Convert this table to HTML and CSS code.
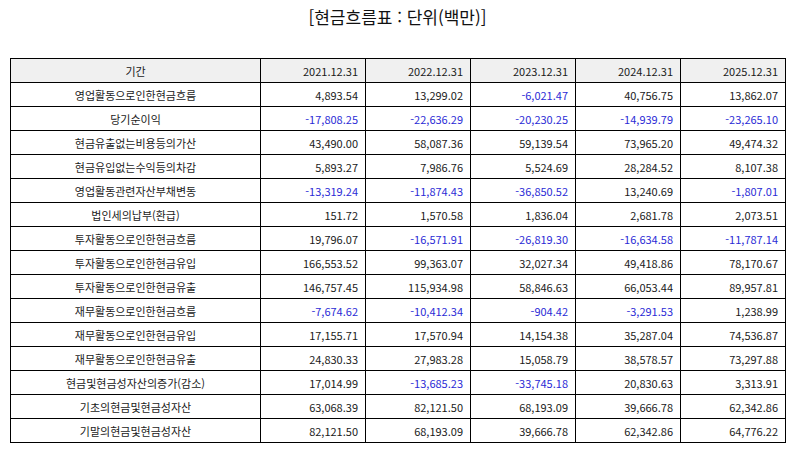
FILE: index.html
```html
<!DOCTYPE html>
<html lang="ko">
<head>
<meta charset="utf-8">
<link rel="stylesheet" href="styles.css">
</head>
<body>
<div class="page">
  <h1 class="title">[현금흐름표 : 단위(백만)]</h1>
  <table class="cf">
    <colgroup>
      <col class="c-label"><col class="c-num"><col class="c-num"><col class="c-num"><col class="c-num"><col class="c-num">
    </colgroup>
    <thead>
      <tr><th class="lbl">기간</th><th>2021.12.31</th><th>2022.12.31</th><th>2023.12.31</th><th>2024.12.31</th><th>2025.12.31</th></tr>
    </thead>
    <tbody>
      <tr><td class="lbl">영업활동으로인한현금흐름</td><td>4,893.54</td><td>13,299.02</td><td class="neg">-6,021.47</td><td>40,756.75</td><td>13,862.07</td></tr>
      <tr><td class="lbl">당기순이익</td><td class="neg">-17,808.25</td><td class="neg">-22,636.29</td><td class="neg">-20,230.25</td><td class="neg">-14,939.79</td><td class="neg">-23,265.10</td></tr>
      <tr><td class="lbl">현금유출없는비용등의가산</td><td>43,490.00</td><td>58,087.36</td><td>59,139.54</td><td>73,965.20</td><td>49,474.32</td></tr>
      <tr><td class="lbl">현금유입없는수익등의차감</td><td>5,893.27</td><td>7,986.76</td><td>5,524.69</td><td>28,284.52</td><td>8,107.38</td></tr>
      <tr><td class="lbl">영업활동관련자산부채변동</td><td class="neg">-13,319.24</td><td class="neg">-11,874.43</td><td class="neg">-36,850.52</td><td>13,240.69</td><td class="neg">-1,807.01</td></tr>
      <tr><td class="lbl">법인세의납부(환급)</td><td>151.72</td><td>1,570.58</td><td>1,836.04</td><td>2,681.78</td><td>2,073.51</td></tr>
      <tr><td class="lbl">투자활동으로인한현금흐름</td><td>19,796.07</td><td class="neg">-16,571.91</td><td class="neg">-26,819.30</td><td class="neg">-16,634.58</td><td class="neg">-11,787.14</td></tr>
      <tr><td class="lbl">투자활동으로인한현금유입</td><td>166,553.52</td><td>99,363.07</td><td>32,027.34</td><td>49,418.86</td><td>78,170.67</td></tr>
      <tr><td class="lbl">투자활동으로인한현금유출</td><td>146,757.45</td><td>115,934.98</td><td>58,846.63</td><td>66,053.44</td><td>89,957.81</td></tr>
      <tr><td class="lbl">재무활동으로인한현금흐름</td><td class="neg">-7,674.62</td><td class="neg">-10,412.34</td><td class="neg">-904.42</td><td class="neg">-3,291.53</td><td>1,238.99</td></tr>
      <tr><td class="lbl">재무활동으로인한현금유입</td><td>17,155.71</td><td>17,570.94</td><td>14,154.38</td><td>35,287.04</td><td>74,536.87</td></tr>
      <tr><td class="lbl">재무활동으로인한현금유출</td><td>24,830.33</td><td>27,983.28</td><td>15,058.79</td><td>38,578.57</td><td>73,297.88</td></tr>
      <tr><td class="lbl">현금및현금성자산의증가(감소)</td><td>17,014.99</td><td class="neg">-13,685.23</td><td class="neg">-33,745.18</td><td>20,830.63</td><td>3,313.91</td></tr>
      <tr><td class="lbl">기초의현금및현금성자산</td><td>63,068.39</td><td>82,121.50</td><td>68,193.09</td><td>39,666.78</td><td>62,342.86</td></tr>
      <tr><td class="lbl">기말의현금및현금성자산</td><td>82,121.50</td><td>68,193.09</td><td>39,666.78</td><td>62,342.86</td><td>64,776.22</td></tr>
    </tbody>
  </table>
</div>
</body>
</html>
```
FILE: styles.css
```css
html, body {
  margin: 0;
  padding: 0;
  background: #ffffff;
}
.page {
  padding: 7px 9px 0 10px;
  font-family: "Noto Sans CJK KR", "Noto Sans", sans-serif;
  color: #1a1a1a;
}
.title {
  margin: 0;
  height: 51px;
  font-size: 17px;
  line-height: 20px;
  font-weight: normal;
  text-align: center;
  color: #111111;
}
.cf {
  width: 775px;
  border-collapse: collapse;
  table-layout: fixed;
  font-size: 11px;
}
.c-label { width: 250px; }
.c-num { width: 105px; }
.cf th, .cf td {
  border: 1px solid #000000;
  height: 23px;
  padding: 0 7px 0 4px;
  text-align: right;
  font-weight: normal;
  line-height: 14px;
  white-space: nowrap;
}
.cf thead th {
  background: #f0f0f0;
}
.cf .lbl {
  text-align: center;
  padding: 0 4px;
}
.cf .neg {
  color: #2b2bd6;
}
```
